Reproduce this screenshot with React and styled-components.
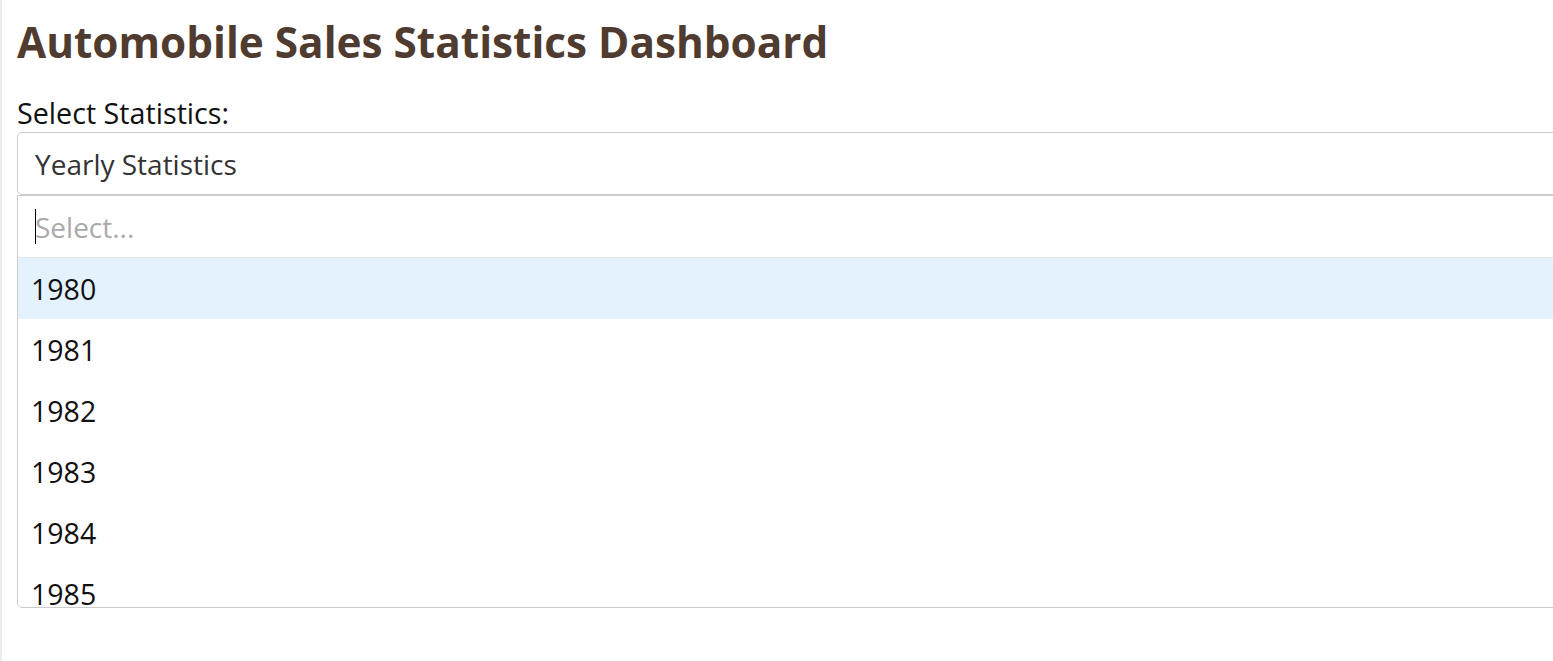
import React from "react";
import styled, { createGlobalStyle } from "styled-components";

const Global = createGlobalStyle`
  html, body {
    margin: 0;
    padding: 0;
    background: #ffffff;
    overflow: hidden;
  }
  body {
    font-family: "Open Sans", "Noto Sans", sans-serif;
  }
`;

const Page = styled.div`
  min-height: 661px;
  box-sizing: border-box;
  border-left: 2px solid #ececec;
  padding: 14px 0 0 15px;
  width: 1640px;
`;

const Title = styled.h1`
  margin: 0 0 30px 0;
  font-size: 42.3px;
  line-height: 56px;
  font-weight: 700;
  color: #4f3b30;
`;

const Label = styled.label`
  display: block;
  font-size: 28.7px;
  line-height: 26px;
  color: #111;
  margin-bottom: 6px;
`;

const Control = styled.div`
  box-sizing: border-box;
  height: 63px;
  border: 1px solid #cccccc;
  border-radius: 5px;
  display: flex;
  align-items: center;
  padding-left: 17px;
  font-size: 28px;
  color: #333333;
`;

const Menu = styled.div`
  box-sizing: border-box;
  height: 413px;
  border: 1px solid #cccccc;
  border-radius: 0 0 5px 5px;
  overflow: hidden;
`;

const SearchRow = styled.div`
  height: 61px;
  border-bottom: 1px solid #e6e6e6;
  display: flex;
  align-items: center;
  padding-left: 17px;
  font-size: 28px;
  color: #aaaaaa;
`;

const Caret = styled.span`
  display: inline-block;
  width: 1px;
  height: 35px;
  background: #000;
  margin-right: -1px;
`;

const Option = styled.div`
  height: 61px;
  flex: none;
  display: flex;
  align-items: center;
  padding-left: 13px;
  font-size: 28.5px;
  color: #111111;
  background: ${(p) => (p.$active ? "#e3f2fd" : "#ffffff")};
`;

const years = [1980, 1981, 1982, 1983, 1984, 1985];

export default function App() {
  return (
    <>
      <Global />
      <Page>
        <Title>Automobile Sales Statistics Dashboard</Title>
        <Label>Select Statistics:</Label>
        <Control>Yearly Statistics</Control>
        <Menu>
          <SearchRow>
            <Caret />
            Select...
          </SearchRow>
          {years.map((y, i) => (
            <Option key={y} $active={i === 0}>
              {y}
            </Option>
          ))}
        </Menu>
      </Page>
    </>
  );
}
